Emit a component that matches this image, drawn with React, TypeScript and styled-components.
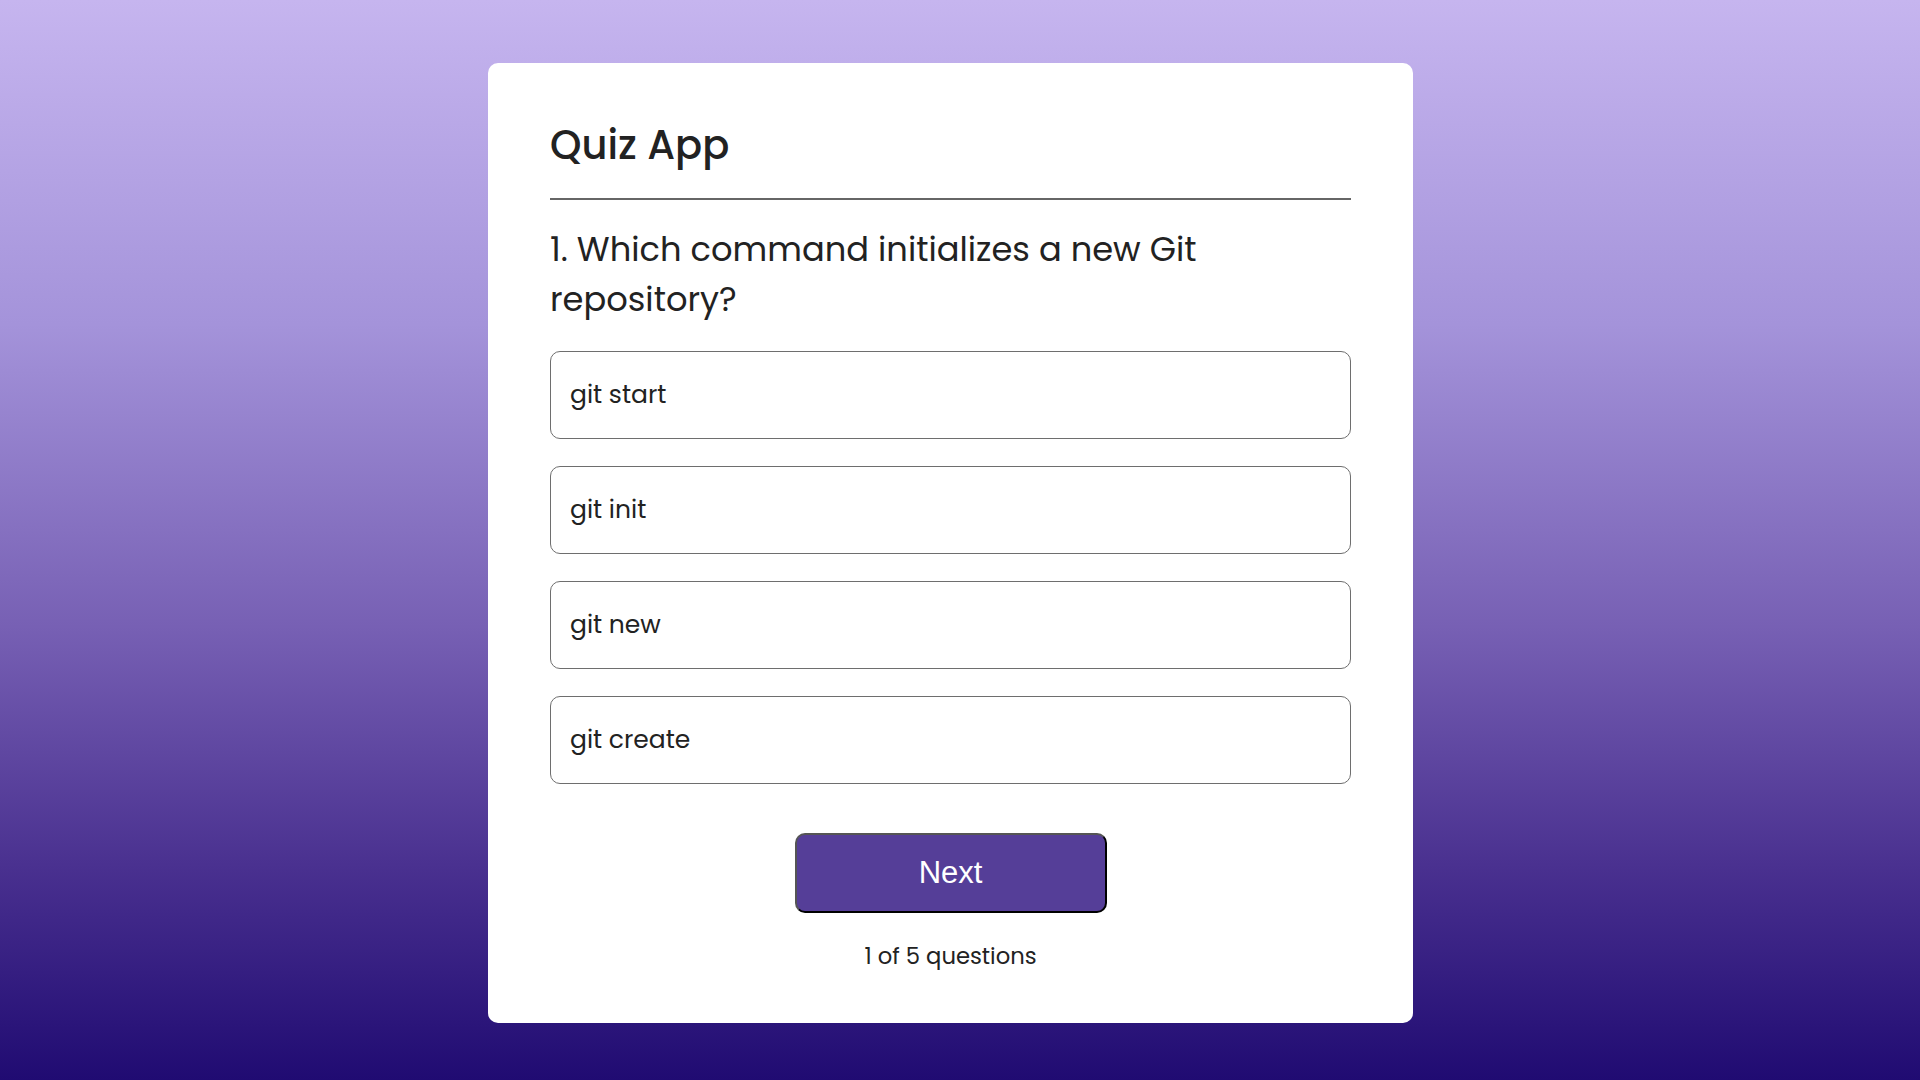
import React from "react";
import styled, { createGlobalStyle } from "styled-components";

const GlobalStyle = createGlobalStyle`
  body {
    margin: 0;
    min-height: 100vh;
    font-family: "Poppins", "Inter", "Noto Sans", sans-serif;
    color: #222;
    background: linear-gradient(180deg, #c6b5ef 0%, #a493da 30%, #7760b4 58%, #4a3190 80%, #200b72 100%) fixed;
  }
`;

const Page = styled.div`
  display: flex;
  justify-content: center;
  padding: 63px 19px 58px 0;
`;

const Card = styled.main`
  box-sizing: border-box;
  width: 925px;
  background: #fff;
  border-radius: 10px;
  padding: 57px 62px 50px;
  display: flex;
  flex-direction: column;
`;

const Title = styled.h1`
  margin: 0;
  font-size: 40px;
  font-weight: 500;
  line-height: 50px;
  color: #222;
`;

const Rule = styled.hr`
  margin: 28px 0 25px;
  border: none;
  border-top: 2px solid #666;
`;

const Question = styled.h2`
  margin: 0 0 26px;
  font-size: 33.7px;
  font-weight: 400;
  line-height: 50px;
  color: #222;
`;

const Options = styled.ul`
  list-style: none;
  margin: 0;
  padding: 0;
  display: flex;
  flex-direction: column;
  gap: 27px;
`;

const Option = styled.li`
  box-sizing: border-box;
  height: 88px;
  border: 1px solid #6e6e6e;
  border-radius: 10px;
  padding: 0 19px;
  display: flex;
  align-items: center;
  font-size: 25px;
  color: #222;
`;

const NextButton = styled.button`
  align-self: center;
  margin-top: 49px;
  width: 312px;
  height: 80px;
  background: #553e98;
  color: #fff;
  border: 2px outset #555;
  border-right-color: #000;
  border-bottom-color: #000;
  border-radius: 10px;
  font-family: "Liberation Sans", Arial, sans-serif;
  font-size: 31px;
  cursor: pointer;
`;

const Counter = styled.p`
  margin: 26px 0 0;
  text-align: center;
  font-size: 22.7px;
  color: #222;
`;

const options = ["git start", "git init", "git new", "git create"];

export default function App() {
  return (
    <>
      <GlobalStyle />
      <Page>
        <Card>
          <Title>Quiz App</Title>
          <Rule />
          <Question>1. Which command initializes a new Git repository?</Question>
          <Options>
            {options.map((o) => (
              <Option key={o}>{o}</Option>
            ))}
          </Options>
          <NextButton>Next</NextButton>
          <Counter>1 of 5 questions</Counter>
        </Card>
      </Page>
    </>
  );
}
